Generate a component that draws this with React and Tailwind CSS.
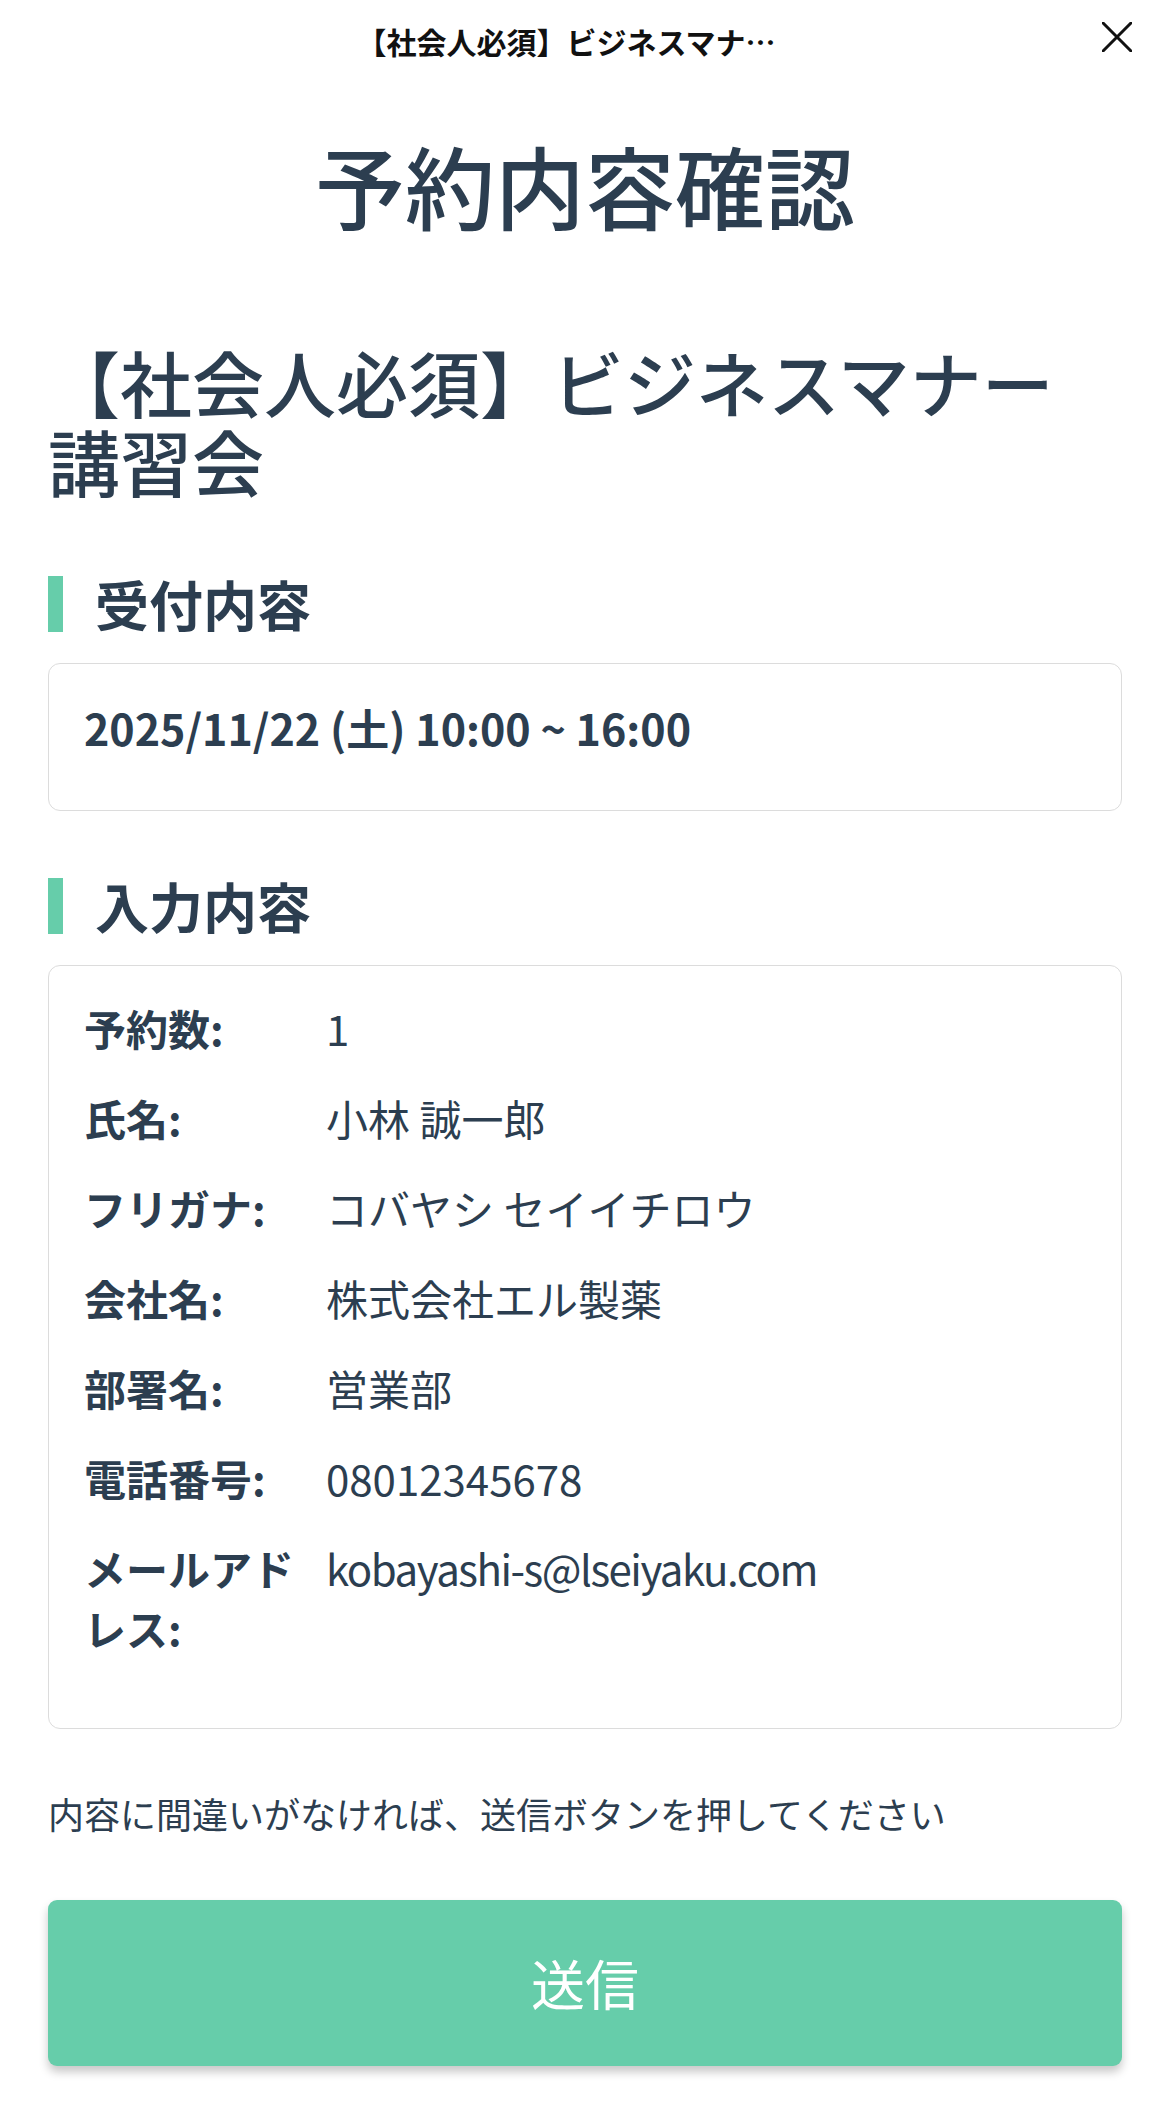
import React from "react";

const font = { fontFamily: '"Noto Sans CJK JP", "Noto Sans", sans-serif' };

function CloseIcon() {
  return (
    <svg width="30" height="30" viewBox="0 0 30 30" fill="none">
      <path d="M1 1 L29 29 M29 1 L1 29" stroke="#111111" strokeWidth="3" strokeLinecap="square" />
    </svg>
  );
}

function SectionHeading({ children }) {
  return (
    <div className="flex items-center h-[56px]">
      <div className="w-[15px] h-[56px] bg-[#66cdaa] shrink-0" />
      <h2 className="ml-[32px] text-[54px] leading-[56px] font-bold text-[#2c3e50]">{children}</h2>
    </div>
  );
}

const rows = [
  ["予約数:", "1", ""],
  ["氏名:", "小林 誠一郎", ""],
  ["フリガナ:", "コバヤシ セイイチロウ", ""],
  ["会社名:", "株式会社エル製薬", ""],
  ["部署名:", "営業部", ""],
  ["電話番号:", "08012345678", ""],
  ["メールアドレス:", "kobayashi-s@lseiyaku.com", "tracking-[-1.5px]"],
];

export default function App() {
  return (
    <div className="w-[1170px] min-h-[2110px] bg-white text-[#2c3e50]" style={font}>
      {/* Top bar */}
      <div className="grid grid-cols-[1fr_auto_1fr] items-center h-[80px] pr-[38px]">
        <div />
        <div className="text-[30px] leading-[40px] font-semibold text-[#111111] mt-[2px]">
          【社会人必須】ビジネスマナ…
        </div>
        <div className="justify-self-end flex items-center -mt-[6px]">
          <CloseIcon />
        </div>
      </div>

      <div className="px-[48px]">
        {/* Page title */}
        <h1 className="mt-[50px] text-center text-[90px] leading-[108px] font-medium text-[#2c3e50]">
          予約内容確認
        </h1>

        {/* Event title */}
        <div className="mt-[103px] text-[72px] leading-[79px] font-medium text-[#2c3e50]">
          【社会人必須】ビジネスマナー講習会
        </div>

        {/* Section 1 */}
        <div className="mt-[77px]">
          <SectionHeading>受付内容</SectionHeading>
        </div>
        <div className="mt-[31px] border border-[#dcdcdc] rounded-[12px] px-[35px] pt-[33px] pb-[53px]">
          <div className="text-[43px] leading-[60px] font-bold text-[#2c3e50]">
            2025/11/22 (土) 10:00 ~ 16:00
          </div>
        </div>

        {/* Section 2 */}
        <div className="mt-[67px]">
          <SectionHeading>入力内容</SectionHeading>
        </div>
        <div className="mt-[31px] border border-[#dcdcdc] rounded-[12px] px-[35px] pt-[32px] pb-[70px]">
          <div className="flex flex-col gap-[30px]">
            {rows.map(([label, value, extra]) => (
              <div key={label} className="grid grid-cols-[242px_1fr] text-[42px] leading-[60px]">
                <div className="font-bold text-[#2c3e50]">{label}</div>
                <div className={"font-normal text-[#2c3e50] " + extra}>{value}</div>
              </div>
            ))}
          </div>
        </div>

        {/* Note */}
        <p className="mt-[57px] text-[36px] leading-[54px] text-[#2c3e50]">
          内容に間違いがなければ、送信ボタンを押してください
        </p>

        {/* Submit */}
        <button
          type="button"
          className="mt-[60px] w-full h-[166px] rounded-[9px] bg-[#66cdaa] text-white text-[54px] leading-[60px] shadow-[0_6px_10px_rgba(0,0,0,0.22)] flex items-center justify-center"
          style={font}
        >
          送信
        </button>
      </div>
    </div>
  );
}
